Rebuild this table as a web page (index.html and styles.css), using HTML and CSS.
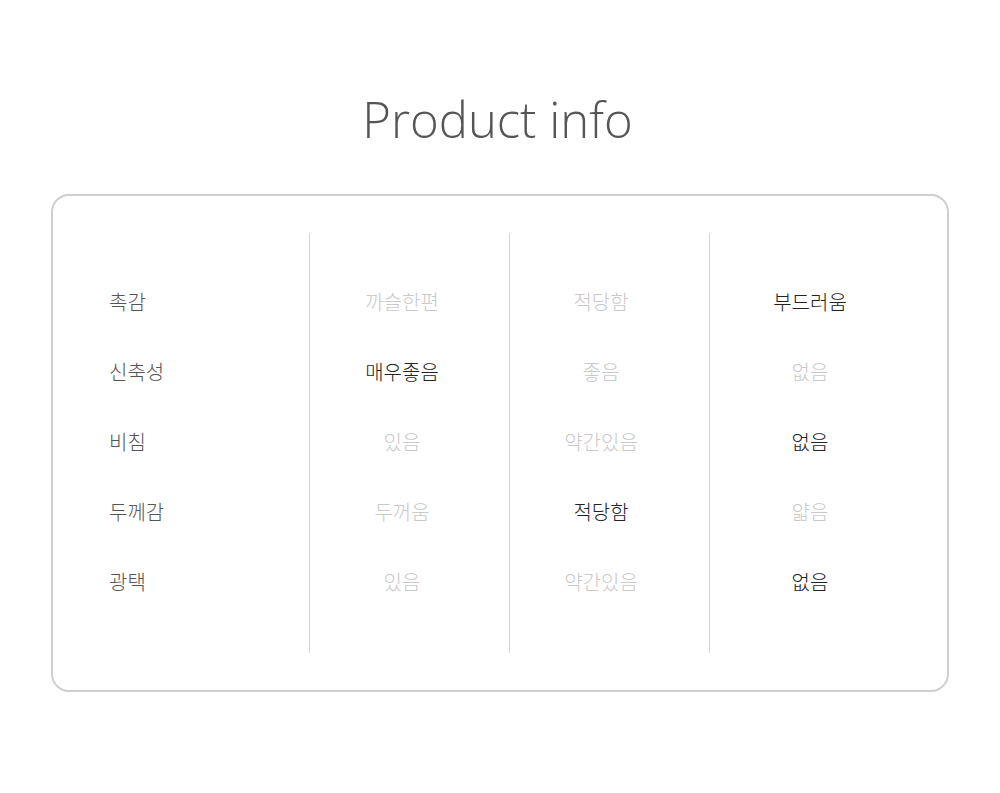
FILE: index.html
```html
<!DOCTYPE html>
<html lang="ko">
<head>
<meta charset="utf-8">
<title>Product info</title>
<link rel="stylesheet" href="styles.css">
</head>
<body>
<main class="page">
  <h1 class="title">Product info</h1>
  <section class="card">
    <div class="grid">
      <div class="col col-label">
        <div class="cell">촉감</div>
        <div class="cell">신축성</div>
        <div class="cell">비침</div>
        <div class="cell">두께감</div>
        <div class="cell">광택</div>
      </div>
      <div class="col col-2">
        <div class="cell">까슬한편</div>
        <div class="cell on">매우좋음</div>
        <div class="cell">있음</div>
        <div class="cell">두꺼움</div>
        <div class="cell">있음</div>
      </div>
      <div class="col col-3">
        <div class="cell">적당함</div>
        <div class="cell">좋음</div>
        <div class="cell">약간있음</div>
        <div class="cell on">적당함</div>
        <div class="cell">약간있음</div>
      </div>
      <div class="col col-4">
        <div class="cell on">부드러움</div>
        <div class="cell">없음</div>
        <div class="cell on">없음</div>
        <div class="cell">얇음</div>
        <div class="cell on">없음</div>
      </div>
    </div>
  </section>
</main>
</body>
</html>
```

FILE: styles.css
```css
* { box-sizing: border-box; }
html, body { margin: 0; padding: 0; background: #fff; }
body {
  font-family: "Noto Sans CJK KR", "Noto Sans", sans-serif;
}
.page {
  width: 1000px;
  height: 793px;
  padding-top: 83px;
}
.title {
  margin: 0;
  height: 74px;
  padding-right: 5px;
  text-align: center;
  font-family: "Open Sans", sans-serif;
  font-weight: 300;
  font-size: 49px;
  line-height: 72px;
  color: #555;
}
.card {
  margin: 37px 51px 0;
  width: 898px;
  height: 498px;
  border: 2px solid #cfcfcf;
  border-radius: 18px;
  padding: 37px 0;
}
.grid {
  display: grid;
  grid-template-columns: 257px 200px 200px 1fr;
  height: 420px;
}
.col {
  display: flex;
  flex-direction: column;
  justify-content: center;
  border-right: 1px solid #d4d4d4;
}
.col-4 { border-right: none; padding-right: 37px; }
.col-2 { padding-right: 15px; }
.col-3 { padding-right: 17px; }
.col-label { padding-left: 56px; }
.cell {
  height: 70px;
  display: flex;
  align-items: center;
  justify-content: center;
  font-size: 20px;
  font-weight: 300;
  color: #c9c9c9;
  padding-bottom: 4px;
}
.col-label .cell { justify-content: flex-start; color: #555; }
.cell.on { color: #222; }
```
